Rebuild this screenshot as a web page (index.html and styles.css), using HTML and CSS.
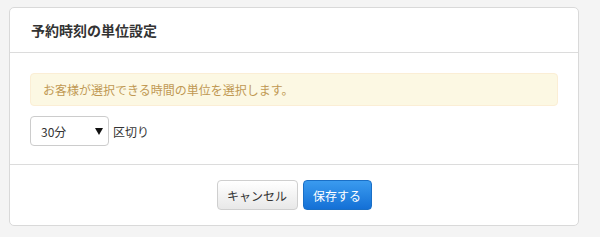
FILE: index.html
```html
<!DOCTYPE html>
<html lang="ja">
<head>
    <meta charset="UTF-8">
    <title>予約時刻の単位設定</title>
    <link rel="stylesheet" href="styles.css">
</head>
<body>
    <div class="panel">
        <!-- Header -->
        <div class="panel-header">
            <h3>予約時刻の単位設定</h3>
        </div>

        <!-- Body -->
        <div class="panel-body">
            <div class="alert">お客様が選択できる時間の単位を選択します。</div>
            <div class="unit-row">
                <div class="select-wrap">
                    <select class="unit-select">
                        <option>15分</option>
                        <option selected>30分</option>
                        <option>60分</option>
                    </select>
                </div>
                <span class="unit-label">区切り</span>
            </div>
        </div>

        <!-- Footer -->
        <div class="panel-footer">
            <button type="button" class="btn btn-cancel">キャンセル</button>
            <button type="button" class="btn btn-primary">保存する</button>
        </div>
    </div>
</body>
</html>
```

FILE: styles.css
```css
body {
    margin: 0;
    padding: 7px 22px 0 9px;
    background-color: #f4f4f4;
    font-family: "Noto Sans CJK JP", "Liberation Sans", sans-serif;
    font-size: 12px;
    color: #333;
}

.panel {
    width: 568px;
    background-color: #fff;
    border: 1px solid #d9d9d9;
    border-radius: 5px;
}

.panel-header {
    height: 44px;
    padding: 0 21px;
    display: flex;
    align-items: center;
    border-bottom: 1px solid #dcdcdc;
}

.panel-header h3 {
    margin: 0;
    font-size: 14px;
    font-weight: bold;
    color: #333;
}

.panel-body {
    padding: 20px 20px 18px 20px;
    border-bottom: 1px solid #dcdcdc;
}

.alert {
    height: 31px;
    padding: 0 12px;
    display: flex;
    align-items: center;
    background-color: #fcf8e3;
    border: 1px solid #fbeed5;
    border-radius: 4px;
    color: #c09853;
    font-size: 12px;
    margin-bottom: 10px;
}

.unit-row {
    display: flex;
    align-items: center;
    gap: 4px;
}

.select-wrap {
    position: relative;
}

.select-wrap::after {
    content: "";
    position: absolute;
    right: 6px;
    top: 12px;
    border-left: 4px solid transparent;
    border-right: 4px solid transparent;
    border-top: 7px solid #111;
    pointer-events: none;
}

.unit-select {
    -webkit-appearance: none;
    appearance: none;
    width: 79px;
    height: 30px;
    padding: 0 10px;
    border: 1px solid #ccc;
    border-radius: 4px;
    background-color: #fff;
    font-family: inherit;
    font-size: 12px;
    color: #333;
}

.unit-label {
    font-size: 12px;
}

.panel-footer {
    padding: 15px 0 15px;
    display: flex;
    justify-content: center;
    gap: 5px;
}

.btn {
    height: 30px;
    padding: 0;
    font-family: inherit;
    font-size: 12px;
    color: #333;
    background: linear-gradient(#ffffff, #e8e8e8);
    border: 1px solid #cfcfcf;
    border-radius: 4px;
    cursor: pointer;
}

.btn-cancel {
    width: 81px;
}

.btn-primary {
    width: 69px;
    color: #fff;
    background: linear-gradient(#3a9bef, #1470d6);
    border-color: #1a6fc6;
}
```
